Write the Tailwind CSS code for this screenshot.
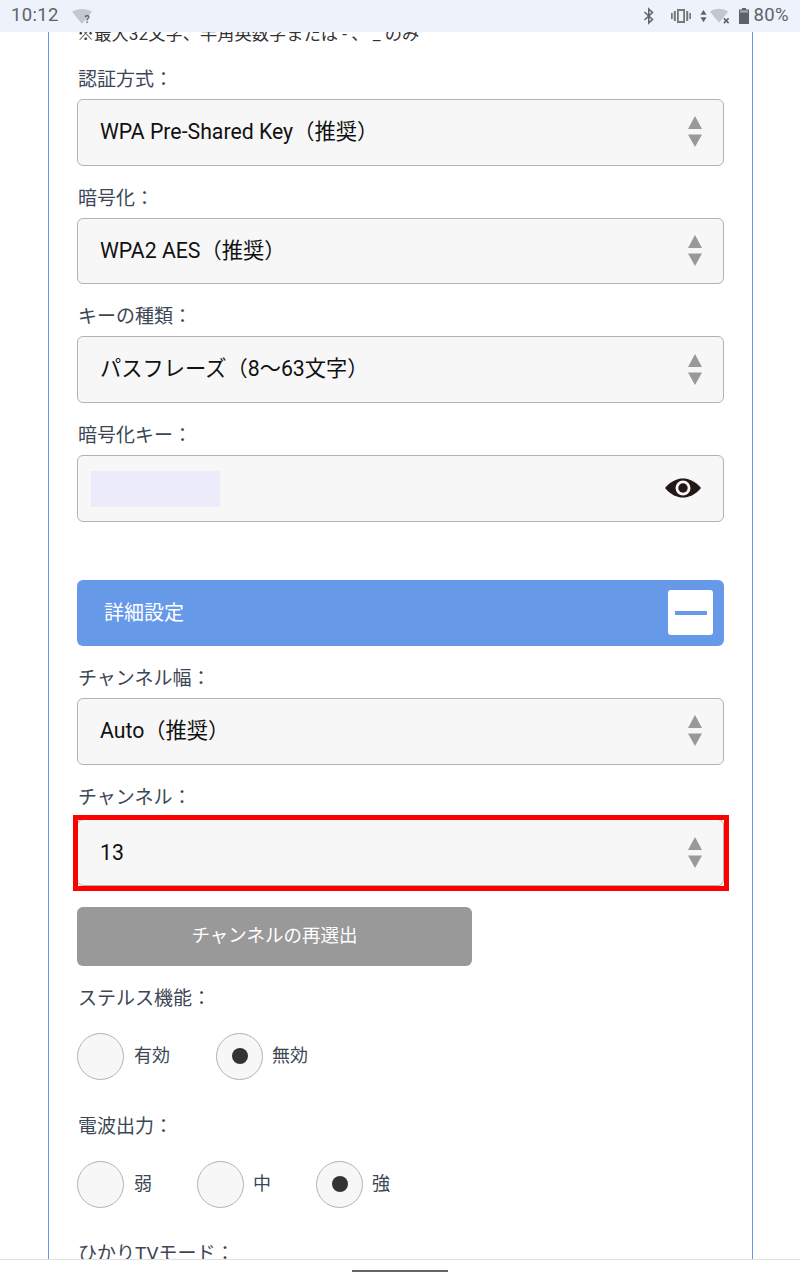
<!DOCTYPE html>
<html lang="ja">
<head>
<meta charset="utf-8">
<script src="https://cdn.jsdelivr.net/npm/@tailwindcss/browser@4"></script>
<title>設定</title>
</head>
<body class="bg-white">
<div class="w-[800px] h-[1280px] flex flex-col overflow-hidden bg-white font-['Roboto','Noto_Sans_CJK_JP',sans-serif]">
  <!-- status bar -->
  <header class="h-[32px] shrink-0 bg-[#edf2fb] flex items-center justify-between pl-[11px] pr-[11px] text-[#5f6368] relative z-10">
    <div class="flex items-center gap-[13px]">
      <span class="text-[18.5px] tracking-[0.35px]">10:12</span>
      <svg width="21" height="17" viewBox="0 0 20 16"><path d="M0 3.500C3 1.500 6 .8 9.500 .8S16 1.500 19 3.500L9.500 15z" fill="#c4c7cc"/><text x="12" y="14.500" font-size="10" font-weight="700" fill="#5f6368" font-family="Roboto">?</text></svg>
    </div>
    <div class="flex items-center">
      <svg width="12" height="18" viewBox="0 0 12 18" class="mr-[16px]" fill="none" stroke="#5f6368" stroke-width="1.500"><path d="M1.500 5l8 7.500L5.800 16V2l3.700 3.500-8 7.500"/></svg>
      <svg width="20" height="16" viewBox="0 0 20 16" class="mr-[9px]" fill="#777"><rect x="0" y="5" width="1.700" height="6"/><rect x="2.800" y="3" width="2" height="10"/><rect x="15.200" y="3" width="2" height="10"/><rect x="18.300" y="5" width="1.700" height="6"/><path fill-rule="evenodd" d="M6 1h8v14H6zM7.800 3v10h4.400V3z"/></svg>
      <svg width="7" height="14" viewBox="0 0 8 14" class="mr-[3px]" fill="#5f6368"><path d="M4 0l3.500 5.500h-7zM4 14L.5 8.500h7z"/></svg>
      <svg width="21" height="18" viewBox="0 0 22 18" class="mr-[8px]"><path d="M0 4.500C3 2.300 6 1.500 9.500 1.500S16 2.300 19 4.500L9.500 16z" fill="#c4c7cc"/><path d="M14.500 11.500l5 5m0-5l-5 5" stroke="#5f6368" stroke-width="1.600"/></svg>
      <svg width="10" height="16" viewBox="0 0 10 16" class="mr-[5px]" fill="#5f6368"><path d="M3 0h4v1.500h3V16H0V1.500h3z"/><rect x="1" y="2.500" width="8" height="2" fill="#a8abb0"/></svg>
      <span class="text-[18.5px] tracking-[0.35px]">80%</span>
    </div>
  </header>

  <!-- scrolled page -->
  <main class="flex-1 min-h-0 overflow-hidden">
    <div class="mx-[48px] w-[705px] border-x border-[#6699e8] -mt-[10px] pt-0 px-[28px] h-[1300px] text-[#3c4654] text-[19px]">
      <p class="h-[24px] leading-[24px] text-[17.25px] mb-[19px] text-[#333]">※最大32文字、半角英数字または - 、 _ のみ</p>

      <div class="mb-[18px]">
        <p class="h-[26px] leading-[30px] mb-[8px] pl-px">認証方式：</p>
        <div class="h-[66.67px] rounded-[6px] border border-[#b3b3b3] bg-[#f7f7f7] flex items-center justify-between pl-[22px] pr-[21px] text-[21.25px] text-[#111]"><span class="pb-[1px]">WPA Pre-Shared Key（推奨）</span><svg class="mb-px" width="14" height="31" viewBox="0 0 14 31" fill="#999"><path d="M7 0l7 13H0zM7 31L0 18.500h14z"/></svg></div>
      </div>
      <div class="mb-[18px]">
        <p class="h-[26px] leading-[30px] mb-[8px] pl-px">暗号化：</p>
        <div class="h-[66.67px] rounded-[6px] border border-[#b3b3b3] bg-[#f7f7f7] flex items-center justify-between pl-[22px] pr-[21px] text-[21.25px] text-[#111]"><span class="pb-[1px]">WPA2 AES（推奨）</span><svg class="mb-px" width="14" height="31" viewBox="0 0 14 31" fill="#999"><path d="M7 0l7 13H0zM7 31L0 18.500h14z"/></svg></div>
      </div>
      <div class="mb-[18px]">
        <p class="h-[26px] leading-[30px] mb-[8px] pl-px">キーの種類：</p>
        <div class="h-[66.67px] rounded-[6px] border border-[#b3b3b3] bg-[#f7f7f7] flex items-center justify-between pl-[22px] pr-[21px] text-[21.25px] text-[#111]"><span class="pb-[1px]">パスフレーズ（8〜63文字）</span><svg class="mb-px" width="14" height="31" viewBox="0 0 14 31" fill="#999"><path d="M7 0l7 13H0zM7 31L0 18.500h14z"/></svg></div>
      </div>
      <div class="mb-[58px]">
        <p class="h-[26px] leading-[30px] mb-[8px] pl-px">暗号化キー：</p>
        <div class="h-[66.67px] rounded-[6px] border border-[#b3b3b3] bg-[#f7f7f7] flex items-center justify-between pl-[13px] pr-[22px]">
          <div class="w-[129px] h-[36px] mt-px bg-[#ebebf9]"></div>
          <svg width="36" height="20" viewBox="0 0 36 20"><path d="M0 10C6 3 12 .5 18 .5S30 3 36 10c-6 7-12 9.500-18 9.500S6 17 0 10z" fill="#231815"/><circle cx="18" cy="10" r="7.500" fill="#f7f7f7"/><circle cx="18" cy="10" r="4.700" fill="#231815"/></svg>
        </div>
      </div>

      <div class="h-[66px] rounded-[6px] bg-[#6699e8] flex items-center justify-between pl-[27px] pr-[11px] text-white text-[20px] mb-[18.4px]">
        <span>詳細設定</span>
        <div class="w-[45px] h-[45px] rounded-[3px] bg-white flex items-center justify-center"><div class="w-[32px] h-[4px] bg-[#6699e8]"></div></div>
      </div>

      <div class="mb-[20.6px]">
        <p class="h-[26px] leading-[30px] mb-[8px] pl-px">チャンネル幅：</p>
        <div class="h-[66.67px] rounded-[6px] border border-[#b3b3b3] bg-[#f7f7f7] flex items-center justify-between pl-[22px] pr-[21px] text-[21.25px] text-[#111]"><span>Auto（推奨）</span><svg class="mb-px" width="14" height="31" viewBox="0 0 14 31" fill="#999"><path d="M7 0l7 13H0zM7 31L0 18.500h14z"/></svg></div>
      </div>
      <div class="mb-[21px]">
        <p class="h-[26px] leading-[26px] mb-[8px] pl-px">チャンネル：</p>
        <div class="relative h-[66.67px] rounded-[6px] border border-[#b3b3b3] bg-[#f7f7f7] flex items-center justify-between pl-[22px] pr-[21px] text-[21.25px] text-[#111]">
          <span>13</span><svg class="mb-px" width="14" height="31" viewBox="0 0 14 31" fill="#999"><path d="M7 0l7 13H0zM7 31L0 18.500h14z"/></svg>
          <div class="absolute -left-[5px] -right-[6px] -top-[5px] -bottom-[6px] border-[5px] border-[#ff0000]"></div>
        </div>
      </div>

      <button class="block w-[395px] h-[59px] rounded-[6px] bg-[#999999] text-white text-[18.5px] mb-[18px]">チャンネルの再選出</button>

      <p class="h-[26px] leading-[30px] mb-[23px] pl-px">ステルス機能：</p>
      <div class="flex items-center h-[47px] mb-[32px] text-[18px]">
        <div class="w-[47px] h-[47px] rounded-full border border-[#b3b3b3] bg-[#f7f7f7]"></div>
        <span class="ml-[10px] w-[82px] pb-[2px]">有効</span>
        <div class="w-[47px] h-[47px] rounded-full border border-[#b3b3b3] bg-[#f7f7f7] flex items-center justify-center"><div class="w-[16px] h-[16px] rounded-full bg-[#333]"></div></div>
        <span class="ml-[9px] pb-[2px]">無効</span>
      </div>

      <p class="h-[26px] leading-[30px] mb-[23px] pl-px">電波出力：</p>
      <div class="flex items-center h-[47px] mb-[32px] text-[18px]">
        <div class="w-[47px] h-[47px] rounded-full border border-[#b3b3b3] bg-[#f7f7f7]"></div>
        <span class="ml-[10px] w-[63px] pb-[2px]">弱</span>
        <div class="w-[47px] h-[47px] rounded-full border border-[#b3b3b3] bg-[#f7f7f7]"></div>
        <span class="ml-[9px] w-[63px] pb-[2px]">中</span>
        <div class="w-[47px] h-[47px] rounded-full border border-[#b3b3b3] bg-[#f7f7f7] flex items-center justify-center"><div class="w-[16px] h-[16px] rounded-full bg-[#333]"></div></div>
        <span class="ml-[9px] pb-[2px]">強</span>
      </div>

      <p class="h-[26px] leading-[28px] pl-px">ひかりTVモード：</p>
    </div>
  </main>

  <!-- navigation bar -->
  <footer class="h-[21px] shrink-0 bg-white border-t border-[#e0e0e0] flex justify-center pt-[10px] relative z-10">
    <div class="w-[96px] h-[2px] bg-[#666]"></div>
  </footer>
</div>
</body>
</html>
